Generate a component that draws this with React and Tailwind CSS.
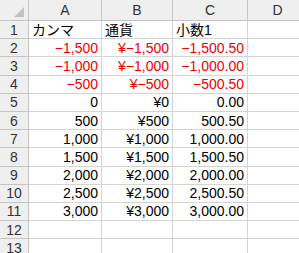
import React from 'react'

const cols = ['A', 'B', 'C', 'D']

// each row: [value, isRed, align]
const rows = [
  [['カンマ', false, 'left'], ['通貨', false, 'left'], ['小数1', false, 'left']],
  [['−1,500', true], ['¥−1,500', true], ['−1,500.50', true]],
  [['−1,000', true], ['¥−1,000', true], ['−1,000.00', true]],
  [['−500', true], ['¥−500', true], ['−500.50', true]],
  [['0'], ['¥0'], ['0.00']],
  [['500'], ['¥500'], ['500.50']],
  [['1,000'], ['¥1,000'], ['1,000.00']],
  [['1,500'], ['¥1,500'], ['1,500.50']],
  [['2,000'], ['¥2,000'], ['2,000.00']],
  [['2,500'], ['¥2,500'], ['2,500.50']],
  [['3,000'], ['¥3,000'], ['3,000.00']],
  [],
  [],
]

const Cell = ({ cell }) => {
  if (!cell) return <div className="border-r border-b border-[#d4d4d4] bg-white" />
  const [text, red, align] = cell
  return (
    <div
      className={`flex items-center overflow-hidden whitespace-nowrap border-r border-b border-[#d4d4d4] bg-white px-[3px] ${
        align === 'left' ? 'justify-start' : 'justify-end'
      } ${red ? 'text-[#f00000]' : 'text-black'}`}
    >
      {text}
    </div>
  )
}

export default function App() {
  return (
    <div
      className="h-[253px] w-[299px] overflow-hidden bg-white text-[14px] leading-none"
      style={{ fontFamily: '"Liberation Sans", "Noto Sans CJK JP", sans-serif' }}
    >
      <div className="grid grid-cols-[29px_73px_71px_75px_60px] grid-rows-[21px_repeat(13,18.2px)]">
        {/* corner */}
        <div className="relative border-r border-b border-[#c4c4c4] bg-[#efefef]">
          <div className="absolute right-[4px] bottom-[3px] h-0 w-0 border-t-[10px] border-l-[10px] border-t-transparent border-l-transparent border-b-0 border-r-[10px] border-r-[#c2c2c2]" />
        </div>
        {cols.map((c) => (
          <div
            key={c}
            className="flex items-center justify-center border-r border-b border-[#c4c4c4] bg-[#efefef] text-[#333]"
          >
            {c}
          </div>
        ))}
        {rows.map((r, i) => (
          <React.Fragment key={i}>
            <div className="flex items-center justify-center border-r border-b border-[#c4c4c4] bg-[#efefef] text-[#333]">
              {i + 1}
            </div>
            <Cell cell={r[0]} />
            <Cell cell={r[1]} />
            <Cell cell={r[2]} />
            <Cell />
          </React.Fragment>
        ))}
      </div>
    </div>
  )
}
